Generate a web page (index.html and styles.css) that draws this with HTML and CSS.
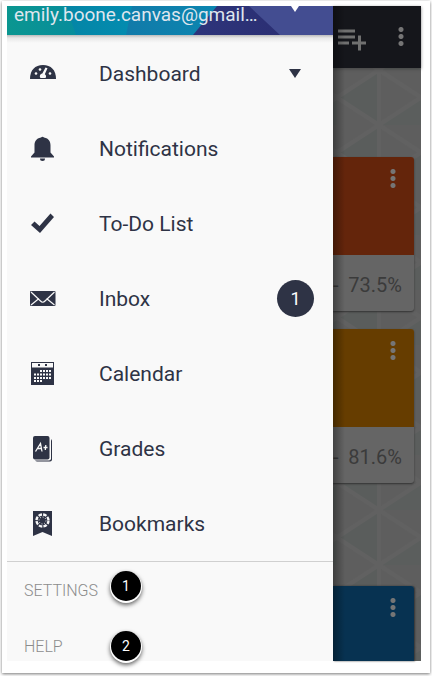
FILE: index.html
```html
<!DOCTYPE html>
<html lang="en">
<head>
<meta charset="utf-8">
<meta name="viewport" content="width=device-width, initial-scale=1">
<title>Navigation drawer</title>
<link rel="stylesheet" href="styles.css">
</head>
<body>
<div class="frame">
  <div class="screen">
    <nav class="drawer" aria-label="Main">
      <header class="account">
        <svg class="account-art" viewBox="0 0 326 29" preserveAspectRatio="none" aria-hidden="true">
          <defs>
            <linearGradient id="teal"><stop offset="0" stop-color="#0b9690"/><stop offset="1" stop-color="#078d9c"/></linearGradient>
            <linearGradient id="cyan"><stop offset="0" stop-color="#067f9c"/><stop offset="1" stop-color="#038cb0"/></linearGradient>
            <linearGradient id="blue"><stop offset="0" stop-color="#1a6ba0"/><stop offset="1" stop-color="#0b86b0"/></linearGradient>
            <linearGradient id="indigo"><stop offset="0" stop-color="#32408b"/><stop offset="1" stop-color="#2b2f73"/></linearGradient>
          </defs>
          <rect width="326" height="29" fill="#434d91"/>
          <path d="M0 0H242L273 29H0Z" fill="url(#indigo)"/>
          <path d="M0 0H210L186 29H0Z" fill="url(#blue)"/>
          <path d="M0 0H125L119 29H0Z" fill="url(#cyan)"/>
          <path d="M0 0H59L69 29H0Z" fill="url(#teal)"/>
        </svg>
        <span class="email">emily.boone.canvas@gmail…</span>
        <svg class="account-arrow" viewBox="0 0 12 9" aria-hidden="true"><path d="M0 0H12L6 9Z"/></svg>
      </header>
      <ul class="menu">
        <li><a class="item" href="#dashboard">
          <svg class="icon" viewBox="0 0 26 26" aria-hidden="true"><path d="M0 18C0 9 5 4 13 4S26 9 26 18Z"/><g class="cut"><circle cx="6" cy="12.500" r="1.300"/><circle cx="10" cy="8.500" r="1.300"/><circle cx="20" cy="12.500" r="1.300"/><path d="M15.500 6.500L17.500 7.200L14.800 13.300A2.700 2.700 0 0 1 15.500 17H10.500A2.700 2.700 0 0 1 12.300 12.500Z"/></g></svg>
          <span>Dashboard</span>
          <svg class="caret" viewBox="0 0 12 9" aria-hidden="true"><path d="M0 0H12L6 9Z"/></svg>
        </a></li>
        <li><a class="item" href="#notifications">
          <svg class="icon" viewBox="0 0 26 26" aria-hidden="true"><path d="M11 1.500A2 2 0 0 1 14 1.500C19 2.500 20.500 5.500 20.500 9.500V16.500L24 20.500V21.500H1V20.500L4.500 16.500V9.500C4.500 5.500 6 2.500 11 1.500ZM10 22.500H15A2.500 2.500 0 0 1 10 22.500Z"/></svg>
          <span>Notifications</span>
        </a></li>
        <li><a class="item" href="#todo">
          <svg class="icon" viewBox="0 0 26 26" aria-hidden="true"><path d="M1 14L4.500 10.500L9.500 15L20.500 2.500L24 6L10 22Z"/></svg>
          <span>To-Do List</span>
        </a></li>
        <li><a class="item" href="#inbox">
          <svg class="icon" viewBox="0 0 26 26" aria-hidden="true"><rect y="5" width="25.500" height="15" rx="1"/><path class="line" d="M1 6L10.500 15Q12.700 17.500 15 15L24.500 6M1 19L9 12.500M24.500 19L16.500 12.500"/></svg>
          <span>Inbox</span>
          <span class="count">1</span>
        </a></li>
        <li><a class="item" href="#calendar">
          <svg class="icon" viewBox="0 0 26 26" aria-hidden="true"><path d="M1 1H24V24H1Z"/><path class="cut" d="M2 2H23V6.500H2Z"/><path d="M8 3H10V5H8ZM15 3H17V5H15Z"/><path class="dots" d="M10 10H21.500M4 13.500H21.500M4 17H21.500M4 20H12.500"/></svg>
          <span>Calendar</span>
        </a></li>
        <li><a class="item" href="#grades">
          <svg class="icon" viewBox="0 0 26 26" aria-hidden="true"><rect x="5" y="3" width="17" height="22.500" rx="2"/><rect class="cut" x="3" y="1" width="18" height="23.500" rx="2"/><rect x="3" y="0" width="16.500" height="23.500" rx="2"/><path class="grade" d="M5.500 15.500L10.500 7.500L12 15.500M7.500 12.500H11.500M13.500 11.500H17.500M15.800 9L15.300 14"/></svg>
          <span>Grades</span>
        </a></li>
        <li><a class="item" href="#bookmarks">
          <svg class="icon" viewBox="0 0 26 26" aria-hidden="true"><path d="M3 0H22V25L12.500 21L3 25Z"/><circle class="ring" cx="12.500" cy="9.500" r="6"/><circle class="ring inner" cx="12.500" cy="9.500" r="3.500"/></svg>
          <span>Bookmarks</span>
        </a></li>
      </ul>
      <div class="links">
        <a href="#settings">SETTINGS<span class="step">1</span></a>
        <a href="#help">HELP<span class="step step-low">2</span></a>
      </div>
    </nav>
    <main class="content">
      <svg class="pattern" aria-hidden="true">
        <defs><pattern id="tri" x="4" y="9" width="84" height="55" patternUnits="userSpaceOnUse">
          <path d="M0 27.500L42 0V55Z" fill="#5a5d5c"/>
          <path d="M84 27.500L42 55H84Z" fill="#5b5e5d"/>
          <path d="M42 -1V56M0 27.500L42 0L84 27.500L42 55Z" fill="none" stroke="#616161" stroke-width="4"/>
        </pattern></defs>
        <rect width="100%" height="100%" fill="url(#tri)"/>
      </svg>
      <div class="toolbar">
        <button class="tool" aria-label="Add to list"><svg width="28" height="22" viewBox="0 0 28 22"><path d="M0 2H17M0 8H17M0 14H11M14 14H28M21.500 6.500V21.500"/></svg></button>
        <button class="more" aria-label="More options"></button>
      </div>
      <div class="cards">
        <article class="card">
          <div class="cover orange"><button class="more" aria-label="Course options"></button></div>
          <p class="score"><span>-</span><span>73.5%</span></p>
        </article>
        <article class="card">
          <div class="cover amber"><button class="more" aria-label="Course options"></button></div>
          <p class="score"><span>-</span><span>81.6%</span></p>
        </article>
        <article class="card last">
          <div class="cover blue"><button class="more" aria-label="Course options"></button></div>
        </article>
      </div>
    </main>
  </div>
</div>
</body>
</html>
```
FILE: styles.css
```css
* { box-sizing: border-box; }

body {
  margin: 0;
  background: #fff;
  font-family: Roboto, "Liberation Sans", sans-serif;
  color: #2e3345;
}

.frame {
  margin: 1px 2px 3px;
  padding: 5px 9px 12px 5px;
  background: #fff;
  box-shadow: 0 1px 3px #777;
}

.screen {
  display: grid;
  grid-template-columns: 326px 1fr;
}

.drawer {
  position: relative;
  z-index: 1;
  background: #f9f9f9;
}

.account {
  position: relative;
  display: flex;
  align-items: flex-start;
  height: 29px;
  padding: 0 7px;
  overflow: hidden;
}

.account-art {
  position: absolute;
  inset: 0;
  width: 100%;
  height: 100%;
}

.email {
  position: relative;
  color: #dfe6ee;
  font-size: 19px;
  line-height: 18px;
}

.account-arrow {
  position: absolute;
  top: -3px;
  right: 32px;
  width: 12px;
  height: 9px;
  fill: #fff;
}

.menu {
  margin: 0;
  padding: 1px 0 0;
  list-style: none;
  border-bottom: 1px solid #d0d0d0;
  background: linear-gradient(#bbb, #e8e8e8 3px, #f9f9f9 8px);
}

.item {
  display: grid;
  grid-template-columns: 26px 1fr auto;
  column-gap: 43px;
  align-items: center;
  height: 75px;
  padding: 0 19px 0 23px;
  color: inherit;
  font-size: 21px;
  text-decoration: none;
}

.icon { width: 26px; height: 26px; fill: #2e3345; }
.icon .cut { fill: #f9f9f9; }
.icon .line { fill: none; stroke: #f9f9f9; stroke-width: 1.2; }
.icon .dots { fill: none; stroke: #f9f9f9; stroke-width: 2; stroke-dasharray: 2 1; }
.icon .grade { fill: none; stroke: #f9f9f9; stroke-width: 1.3; }
.icon .ring { fill: none; stroke: #f9f9f9; stroke-width: 2.4; stroke-dasharray: 3.5 1.2; }
.icon .inner { stroke-width: 1; stroke-dasharray: 1 1.7; }

.caret { width: 12px; height: 9px; margin-right: 13px; fill: #2e3345; }

.count {
  width: 37px;
  height: 37px;
  border-radius: 50%;
  background: #2e3345;
  color: #fff;
  font-size: 18px;
  line-height: 37px;
  text-align: center;
}

.links {
  display: grid;
  row-gap: 32px;
  padding: 17px 17px 2px;
}

.links a {
  position: relative;
  color: #8c8c8c;
  font-size: 16px;
  font-weight: 300;
  line-height: 24px;
  text-decoration: none;
}

.step {
  position: absolute;
  left: 87px;
  bottom: 2px;
  width: 30px;
  height: 30px;
  border-radius: 50%;
  background: #000;
  box-shadow: 0 1px 0 1px #fff, 0 3px 4px 1px #666;
  color: #fff;
  font-size: 14px;
  font-weight: 400;
  line-height: 30px;
  text-align: center;
}

.step-low { bottom: -2px; }

.content {
  position: relative;
  display: flex;
  flex-direction: column;
  min-width: 0;
  background: #5e5e5e;
}

.content::after {
  content: "";
  position: absolute;
  inset: 0 auto 0 0;
  width: 12px;
  background: linear-gradient(90deg, #0005, #0000);
}

.pattern { position: absolute; width: 100%; height: 100%; }

.toolbar {
  position: relative;
  display: flex;
  align-items: center;
  justify-content: space-between;
  height: 62px;
  padding: 0 17px 0 5px;
  background: #15161b;
  box-shadow: 0 1px 3px #3339;
}

button { padding: 0; border: 0; background: none; }

.tool { display: flex; padding-top: 5px; }
.tool path { fill: none; stroke: #707070; stroke-width: 3; }

.more {
  width: 6px;
  height: 21px;
  background: radial-gradient(circle, #757575 2px, #0000 3px) 0 0 / 6px 7px;
}

.toolbar .more { margin-bottom: 2px; }

.cards {
  position: relative;
  flex: 1;
  display: flex;
  flex-direction: column;
  gap: 18px;
  padding: 89px 7px 0 0;
}

.card {
  border-radius: 0 3px 3px 0;
  background: #656565;
  box-shadow: 0 1px 2px #333;
}

.last { flex: 1; margin-top: 85px; border-radius: 0 3px 0 0; box-shadow: 1px 0 2px #333; }

.cover {
  display: flex;
  justify-content: flex-end;
  align-items: flex-start;
  height: 98px;
  padding: 11px 18px 0;
  border-radius: 0 3px 0 0;
}

.last .cover { height: 100%; }

.orange { background: #64250b; }
.amber { background: #663d00; }
.blue { background: #073251; }

.score {
  display: flex;
  justify-content: space-between;
  margin: 0;
  padding: 4px 12px 0 0;
  color: #3b3b3b;
  font-size: 20px;
  line-height: 52px;
}
```
